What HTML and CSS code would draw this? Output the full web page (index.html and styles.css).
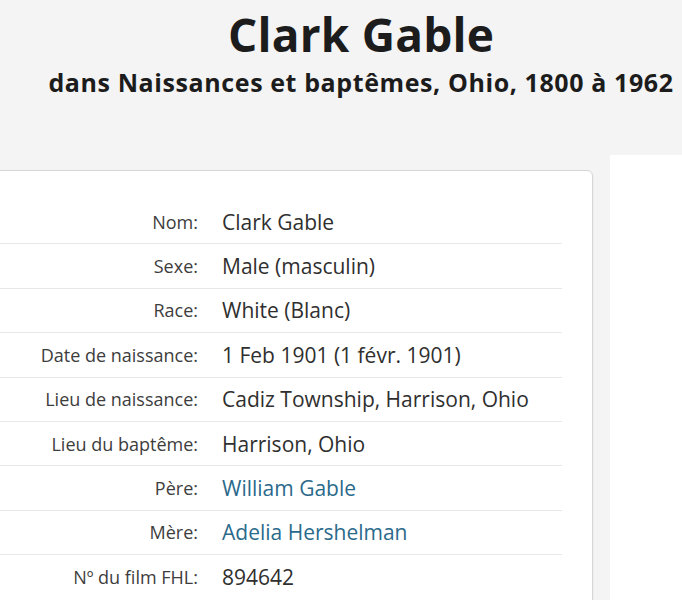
FILE: index.html
```html
<!DOCTYPE html>
<html lang="fr">
<head>
<meta charset="utf-8">
<title>Clark Gable</title>
<link rel="stylesheet" href="styles.css">
</head>
<body>
<header class="page-head">
  <h1 class="title">Clark Gable</h1>
  <p class="subtitle">dans Naissances et baptêmes, Ohio, 1800 à 1962</p>
</header>
<main class="layout">
  <section class="card">
    <div class="rows">
      <div class="row"><span class="label">Nom:</span><span class="value">Clark Gable</span></div>
      <div class="row"><span class="label">Sexe:</span><span class="value">Male (masculin)</span></div>
      <div class="row"><span class="label">Race:</span><span class="value">White (Blanc)</span></div>
      <div class="row"><span class="label">Date de naissance:</span><span class="value">1 Feb 1901 (1 févr. 1901)</span></div>
      <div class="row"><span class="label">Lieu de naissance:</span><span class="value">Cadiz Township, Harrison, Ohio</span></div>
      <div class="row"><span class="label">Lieu du baptême:</span><span class="value">Harrison, Ohio</span></div>
      <div class="row"><span class="label">Père:</span><a class="value link" href="#">William Gable</a></div>
      <div class="row"><span class="label">Mère:</span><a class="value link" href="#">Adelia Hershelman</a></div>
      <div class="row"><span class="label">Nº du film FHL:</span><span class="value">894642</span></div>
    </div>
  </section>
  <aside class="side"></aside>
</main>
</body>
</html>
```

FILE: styles.css
```css
html, body {
  margin: 0;
  padding: 0;
}
body {
  background: #f4f4f4;
  font-family: "Open Sans", "Noto Sans", sans-serif;
  color: #333;
  overflow: hidden;
}
.page-head {
  padding: 6px 0 0 40px;
  text-align: center;
  height: 155px;
  box-sizing: border-box;
}
.title {
  margin: 0;
  font-size: 46px;
  line-height: 56px;
  font-weight: 700;
  color: #1c1c1c;
  letter-spacing: 0.2px;
}
.subtitle {
  margin: 5px 0 0;
  font-size: 25px;
  line-height: 30px;
  font-weight: 700;
  color: #1c1c1c;
  letter-spacing: 0.6px;
  white-space: nowrap;
}
.layout {
  display: flex;
  gap: 17px;
  margin-left: -20px;
  align-items: flex-start;
}
.card {
  flex: 0 0 613px;
  box-sizing: border-box;
  margin-top: 15px;
  background: #fff;
  border: 1px solid #d6d6d6;
  border-radius: 6px;
  box-shadow: 0 1px 2px rgba(0,0,0,0.08);
  padding: 29px 30px 24px 0;
}
.row {
  display: grid;
  grid-template-columns: 217px 1fr;
  column-gap: 24px;
  align-items: center;
  padding: 9.7px 0;
  border-bottom: 1px solid #e8e8e8;
}
.row:last-child {
  border-bottom: none;
}
.label {
  text-align: right;
  font-size: 18px;
  line-height: 24px;
  color: #3d3d3d;
  white-space: nowrap;
}
.value {
  font-size: 21px;
  line-height: 24px;
  color: #2f2f2f;
  white-space: nowrap;
}
.link {
  color: #2b6a8b;
  text-decoration: none;
}
.side {
  flex: 1;
  background: #fff;
  min-height: 470px;
}
```
